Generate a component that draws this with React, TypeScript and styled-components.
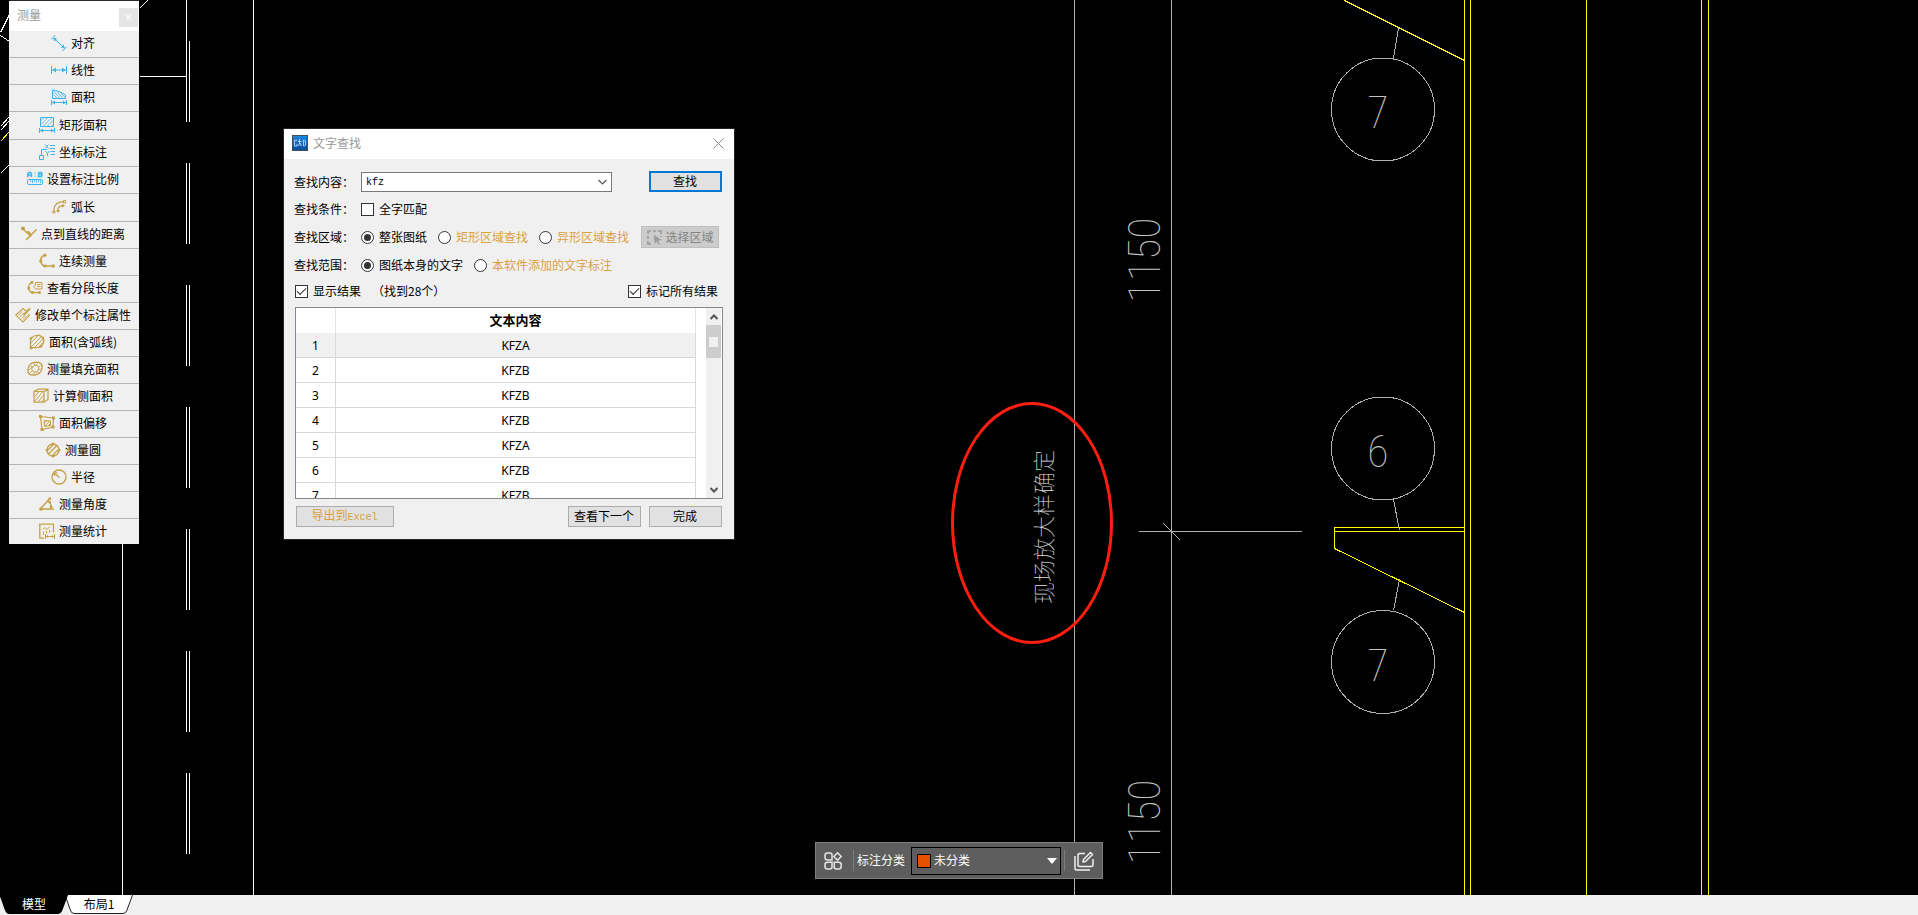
import React, { useState } from 'react';
import styled, { createGlobalStyle, css } from 'styled-components';

const GlobalStyle = createGlobalStyle`
  *, *::before, *::after { box-sizing: border-box; }
  html, body { margin: 0; height: 100%; background: #000; overflow: hidden; }
  body, button, input, select {
    font-family: "Noto Sans CJK SC", "Noto Sans", sans-serif;
    font-size: 12px;
    line-height: 16px;
    color: #000;
  }
`;

const BLUE = '#3cb4ee';
const GOLD = '#c5a148';
const CAD_GRAY = '#b0b0b0';
const CAD_YELLOW = '#ffff00';

/* ---------- page ---------- */

const Page = styled.div`
  display: flex;
  flex-direction: column;
  height: 100vh;
`;

const Canvas = styled.main`
  position: relative;
  flex: 1;
  min-height: 0;
  background: #000;
  overflow: hidden;
`;

const Drawing = styled.svg`
  position: absolute;
  inset: 0;
  width: 100%;
  height: 100%;
`;

const CadDigits = styled.text`
  font-family: "Roboto Condensed", Roboto, sans-serif;
  font-size: 44px;
  font-weight: 100;
  fill: #c4c4c4;
`;

const CadNote = styled.text`
  font-family: "Noto Sans CJK SC", sans-serif;
  font-size: 22px;
  font-weight: 100;
  fill: #e0e0e0;
`;

const DASH_STARTS = [41, 163, 285, 407, 529, 651, 773];

function CadDrawing() {
  return (
    <Drawing aria-label="CAD">
      <g transform="translate(0.5 0.5)" fill="none" strokeWidth="1" shapeRendering="crispEdges">
        <g stroke="#fff">
          <path d="M253 -1V2000M122 540V2000M186 -1V121M139 76H186" />
          {DASH_STARTS.map((y) => (
            <path key={y} d={`M186 ${y - 1}V${y + 80}M189 ${y - 1}V${y + 80}`} />
          ))}
          <path d="M9 14L0 32M0 35L9 41M0 126L9 116M0 130L9 120M0 173L9 164M139 8L147 0" />
          <path d="M15 -1V0M106 -1V1M110 -1V1M122 -1V1" />
        </g>
        <path d="M9 0H138" stroke="#2b2b2b" />
        <g stroke={CAD_YELLOW}>
          <path d="M0 141L9 131" />
          <path d="M1464 -1V2000M1470 -1V2000M1586 -1V2000M1701 -1V2000M1708 -1V2000" />
          <path d="M1344 0L1464 60M1464 527H1334V548L1464 612M1334 531H1464" />
        </g>
        <g stroke={CAD_GRAY}>
          <path d="M1074 -1V2000M1171 -1V2000M1138 531H1301M1163 523L1180 540" />
          <path d="M1398 28L1393 58M1393 499L1399 530M1399 579L1393 610" />
          <circle cx="1382.500" cy="109" r="51.500" />
          <circle cx="1382.500" cy="448" r="51.500" />
          <circle cx="1382.500" cy="661.500" r="51.500" />
        </g>
      </g>
      <CadDigits x="1378" y="128" textAnchor="middle">7</CadDigits>
      <CadDigits x="1378" y="467" textAnchor="middle">6</CadDigits>
      <CadDigits x="1378" y="681" textAnchor="middle">7</CadDigits>
      <CadDigits transform="translate(1160 260) rotate(-90)" textAnchor="middle">1150</CadDigits>
      <CadDigits transform="translate(1160 822) rotate(-90)" textAnchor="middle">1150</CadDigits>
      <CadNote transform="translate(1052 527) rotate(-90)" textAnchor="middle">现场放大样确定</CadNote>
      <ellipse cx="1032" cy="523" rx="79.500" ry="119.500" fill="none" stroke="#ff1e10" strokeWidth="3" />
    </Drawing>
  );
}

/* ---------- measure panel ---------- */

const Panel = styled.aside`
  position: absolute;
  left: 9px;
  top: 1px;
  width: 130px;
  background: #f0f0f0;
`;

const PanelTitle = styled.header`
  display: flex;
  align-items: center;
  justify-content: space-between;
  height: 30px;
  padding: 0 1px 2px 8px;
  background: #fff;
  color: #999;
`;

const PanelClose = styled.button`
  display: grid;
  place-items: center;
  width: 19px;
  height: 19px;
  margin-top: 4px;
  padding: 0;
  border: 0;
  background: #e5e5e5;
`;

const ToolGroup = styled.div`
  & + & { padding-top: 1px; }
`;

const ToolButton = styled.button`
  display: flex;
  align-items: center;
  justify-content: center;
  gap: 4px;
  width: 100%;
  height: 27px;
  padding: 0 2px 2px 0;
  border: 0;
  border-bottom: 1px solid #b4b4b4;
  background: #f0f0f0;
  white-space: nowrap;

  ${ToolGroup}:last-child &:last-child {
    height: 25px;
    border-bottom: 0;
  }
`;

const Glyph = styled.svg<{ $tone: string }>`
  flex: none;
  width: 16px;
  height: 16px;
  fill: none;
  stroke: ${(p) => p.$tone};
  color: ${(p) => p.$tone};
`;

const DimensionBar = () => (
  <>
    <path d="M0.5 11V16M15.5 11V16M1 13.5H15" />
    <path d="M1 13.5L4 11.5V15.5ZM15 13.5L12 11.5V15.5Z" fill="currentColor" stroke="none" />
  </>
);

type Tool = { label: string; icon: React.ReactNode };
type Group = { tone: string; tools: Tool[] };

const GROUPS: Group[] = [
  {
    tone: BLUE,
    tools: [
      {
        label: '对齐',
        icon: (
          <>
            <path d="M0 4.5L4.5 0M11.5 16L16 11.5M3 3.5L13 12.5" />
            <path d="M2 2.5L6 3.5L3.5 6.5ZM14 13.5L10 12.5L12.5 9.5Z" fill="currentColor" stroke="none" />
          </>
        ),
      },
      {
        label: '线性',
        icon: (
          <>
            <path d="M0.5 4V12M15.5 4V12M1 8H15" />
            <path d="M1.5 8L5 5.5V10.5ZM14.5 8L11 5.5V10.5Z" fill="currentColor" stroke="none" />
          </>
        ),
      },
      {
        label: '面积',
        icon: (
          <>
            <path d="M1.5 9.5V1C6 1.5 10 3 14.5 6V9.5Z" />
            <path d="M1.5 4L6 9.5M2 1L9 9.5M6 2.5L12 9.5M10 4L14.5 9" strokeWidth="0.8" />
            <DimensionBar />
          </>
        ),
      },
    ],
  },
  {
    tone: BLUE,
    tools: [
      {
        label: '矩形面积',
        icon: (
          <>
            <path d="M1.5 0.5H14.5V9.5H1.5Z" />
            <path d="M1.5 4L5 0.5M1.5 8L9 0.5M4 9.5L13 0.5M8 9.5L14.5 3M12 9.5L14.5 7" strokeWidth="0.8" />
            <DimensionBar />
          </>
        ),
      },
      {
        label: '坐标标注',
        icon: (
          <>
            <path d="M0.5 11.5H4.5V15.5H0.5ZM2.5 11.5V5.5H8" />
            <path d="M6 0.5L9.5 4.5M9.5 0.5L6 4.5M11 1.5H16M11 4.5H16M6.5 7L8.5 9.5L10.5 7M8.5 9.5V12M11.5 7.5H16M11.5 10.5H16" />
          </>
        ),
      },
      {
        label: '设置标注比例',
        icon: (
          <>
            <path d="M0.7 6V2.5L1.7 1.5H3.5L4.5 2.5V6M0.5 4H4.5" strokeWidth="1.4" />
            <path d="M11.5 1.5H14.5L15 2.5L14.5 3.5H11.5M11.5 1.5V5.5H14.5L15 4.5L14.5 3.5" strokeWidth="1.4" />
            <path d="M7.5 2.2H8.7M7.5 5H8.7" strokeWidth="1.2" />
            <rect x="0.5" y="8.5" width="15" height="5" rx="1" />
            <path d="M3.5 8.5V11M5.5 8.5V12M7.5 8.5V11M9.5 8.5V12M11.5 8.5V11M13.5 8.5V12" strokeWidth="0.8" />
          </>
        ),
      },
    ],
  },
  {
    tone: GOLD,
    tools: [
      {
        label: '弧长',
        icon: (
          <>
            <path d="M3 12V11C3 5.500 6.500 3 12.500 2.700M7 12V11C7 8.500 9 7 11.500 6.700" strokeWidth="1.3" />
            <path d="M1.800 12H4V14H1.800ZM12.500 1.500H14.500V4H12.500Z" />
            <path d="M5 11H9L7 14ZM11 4.800V8.800L14 6.700Z" fill="currentColor" stroke="none" />
          </>
        ),
      },
      {
        label: '点到直线的距离',
        icon: (
          <>
            <path d="M5 14L15.5 3.5M2 3L9 9.5M6 5.5C9 6 10 8 9.5 11" strokeWidth="1.5" />
            <circle cx="2" cy="2.5" r="2" fill="currentColor" stroke="none" />
          </>
        ),
      },
      {
        label: '连续测量',
        icon: (
          <>
            <path d="M6 2C3 3 1.5 5 1.5 8C2 10 3 12 5 13H14" strokeWidth="1.5" />
            <g fill="currentColor" stroke="none">
              <circle cx="6" cy="2.2" r="1.6" />
              <circle cx="1.8" cy="8" r="1.6" />
              <circle cx="6" cy="13" r="1.6" />
              <circle cx="14.2" cy="13" r="1.7" />
            </g>
          </>
        ),
      },
      {
        label: '查看分段长度',
        icon: (
          <>
            <path d="M5.5 2C3 3 1.5 5 1.5 8C2 10 3 12 5 12.5H13" strokeWidth="1.3" />
            <path d="M6.5 7L8.5 5V2.5H15V9H8.5L6.5 7ZM10 4.5H13.5M10 6.5H13.5" />
            <g fill="currentColor" stroke="none">
              <circle cx="5" cy="2.5" r="1.4" />
              <circle cx="1.7" cy="8" r="1.5" />
              <circle cx="5.5" cy="12.5" r="1.5" />
              <circle cx="12.5" cy="12.5" r="1.5" />
            </g>
          </>
        ),
      },
      {
        label: '修改单个标注属性',
        icon: (
          <>
            <path d="M11 4L8 1.500L0.800 8L8 15L14.500 8.500L13 7" strokeWidth="1.1" />
            <path d="M3.5 8L7.500 4.500M5 9.500L8.5 6.500M6.5 11L10 8.500M8 12.500L12 9" strokeWidth="0.9" />
            <path d="M8.5 8L15 1.500" strokeWidth="2" />
          </>
        ),
      },
      {
        label: '面积(含弧线)',
        icon: (
          <>
            <path d="M1.5 14V5C3 2.5 7 1 10.5 1.5C14 2.5 15.5 5.5 14.5 9C13 12.5 10 14 6 13.5Z" strokeWidth="1.3" />
            <path d="M2 9L8.5 2M2 13L12 3M6 13L14 5M10 12.5L14.5 8" />
            <g fill="currentColor" stroke="none">
              <circle cx="2" cy="4.5" r="1.4" />
              <circle cx="2" cy="14" r="1.4" />
              <circle cx="14" cy="4" r="1.3" />
              <circle cx="12" cy="12.5" r="1.3" />
            </g>
          </>
        ),
      },
      {
        label: '测量填充面积',
        icon: (
          <>
            <path d="M1 10.5C0.5 6 3 2 7 1.5C11 0.5 15 1.5 15.2 5C15.5 9 13 13 9.5 13.5C5.5 14.5 1.5 14.5 1 10.5Z" strokeWidth="1.3" />
            <path d="M7 4.5H10L12 7L10 11H6.5L4.5 8Z" />
            <path d="M1 10L5 6M2 13L5.5 9.5M6 14L8 11M3 5L6 6M7 1.5L8 4.5M11 1L9.5 4M15 4L11 6M15 8L11.5 8.5M12 12L10 10.5" strokeWidth="0.8" />
          </>
        ),
      },
      {
        label: '计算侧面积',
        icon: (
          <>
            <path d="M1 3.5L5 1.2H15V11.5L11 14.2H1ZM1 3.5H11V14M11 3.5L15 1.2" strokeWidth="1.2" />
            <path d="M1.5 9L6 3.5M2 13L9.5 4M5 14L11 7M8.5 14L11 11" />
          </>
        ),
      },
      {
        label: '面积偏移',
        icon: (
          <>
            <path d="M1.5 1.5L14.5 3L14 12L3 14.5Z" strokeWidth="1.2" />
            <path d="M5 5.5L11.5 6V10.5L5.5 11.5ZM5 9L8 6M6 11L11 6M9 11L11.5 8.5" />
            <path d="M0 0H3V3H0ZM13 1.5H16V4.5H13ZM12.5 10.5H15.5V13.5H12.5ZM1.5 13H4.5V16H1.5Z" fill="currentColor" stroke="none" />
          </>
        ),
      },
      {
        label: '测量圆',
        icon: (
          <>
            <circle cx="8" cy="8" r="6" strokeWidth="1.3" />
            <path d="M2 9L9 2M3.5 12L12 3.5M7 14L14 7" strokeWidth="1.3" />
            <path d="M8 0L10 2.5H6ZM8 16L10 13.5H6ZM0 8L2.5 6V10ZM16 8L13.5 6V10Z" fill="currentColor" stroke="none" />
          </>
        ),
      },
      {
        label: '半径',
        icon: (
          <>
            <circle cx="8" cy="8" r="7" strokeWidth="1.3" />
            <path d="M8.5 8.5L3.5 4.5M3.2 7V4.2H6.5" strokeWidth="1.3" />
          </>
        ),
      },
      {
        label: '测量角度',
        icon: (
          <>
            <path d="M11 2L1.5 13H15M9 5C11.5 6.5 12.5 9.5 12 13" strokeWidth="1.4" />
            <g fill="currentColor" stroke="none">
              <circle cx="11" cy="2.5" r="1.3" />
              <circle cx="2" cy="13" r="1.8" />
              <path d="M8.500 6L12 4.500L11.5 8ZM10 10H14L12.500 13Z" />
            </g>
          </>
        ),
      },
      {
        label: '测量统计',
        icon: (
          <>
            <path d="M5 15.200H0.8V1.2H14.5V9.5" strokeWidth="1.3" />
            <path d="M4 6.5L6 4.5L8 6.5L11 3.5M4.5 8.5V12M7.5 8V10.5M10.5 7V9.5M6.5 11V16M15.5 11V16M7 13.5H15" />
            <path d="M7 13.5L9 12V15ZM15 13.5L13 12V15Z" fill="currentColor" stroke="none" />
          </>
        ),
      },
    ],
  },
];

function MeasurePanel() {
  return (
    <Panel>
      <PanelTitle>
        测量
        <PanelClose aria-label="关闭">
          <svg width="7" height="7" viewBox="0 0 7 7" stroke="#fafafa" strokeWidth="1.4">
            <path d="M1 1L6 6M6 1L1 6" />
          </svg>
        </PanelClose>
      </PanelTitle>
      {GROUPS.map((group) => (
        <ToolGroup key={group.tools[0].label}>
          {group.tools.map((tool) => (
            <ToolButton key={tool.label}>
              <Glyph $tone={group.tone} viewBox="0 0 16 16" aria-hidden="true">
                {tool.icon}
              </Glyph>
              {tool.label}
            </ToolButton>
          ))}
        </ToolGroup>
      ))}
    </Panel>
  );
}

/* ---------- find dialog ---------- */

const Dialog = styled.section`
  position: absolute;
  left: 284px;
  top: 129px;
  width: 450px;
  background: #f0f0f0;
  box-shadow: 0 0 0 1px #242424;
`;

const DialogTitle = styled.header`
  display: flex;
  align-items: center;
  gap: 5px;
  height: 30px;
  padding: 0 10px 2px 8px;
  background: #fff;
  color: #999;
`;

const DialogName = styled.h1`
  flex: 1;
  margin: 0;
  font-size: 12px;
  font-weight: 400;
`;

const PlainButton = styled.button`
  display: grid;
  place-items: center;
  padding: 0;
  border: 0;
  background: none;
`;

const DialogBody = styled.form`
  display: flex;
  flex-direction: column;
  gap: 6px;
  padding: 12px 11px 12px 10px;
`;

const FieldRow = styled.div`
  display: flex;
  align-items: center;
  gap: 11px;
  height: 22px;
  white-space: nowrap;
`;

const SearchRow = styled(FieldRow)`
  height: 21px;
  padding-right: 1px;
`;

const ResultRow = styled(FieldRow)`
  height: 18px;
  padding: 0 5px 0 1px;
`;

const FieldName = styled.label`
  width: 56px;
`;

const Combo = styled.div`
  display: flex;
  align-items: center;
  width: 251px;
  height: 20px;
  padding: 0 4px;
  border: 1px solid #7a7a7a;
  background: #fff;
`;

const ComboInput = styled.input`
  flex: 1;
  min-width: 0;
  height: 18px;
  padding: 1px 0 0;
  border: 0;
  outline: 0;
  background: none;
  font-family: "Liberation Mono", monospace;
  font-size: 10px;
`;

const Option = styled.label<{ $accent?: boolean }>`
  display: flex;
  align-items: center;
  gap: 5px;
  color: ${(p) => (p.$accent ? '#dba040' : '#000')};
`;

const markBase = css`
  appearance: none;
  display: grid;
  place-items: center;
  flex: none;
  width: 13px;
  height: 13px;
  margin: 0;
  border: 1px solid #333;
  background: #fff;
`;

const Radio = styled.input.attrs({ type: 'radio' })`
  ${markBase}
  border-radius: 50%;

  &:checked::after {
    content: '';
    width: 7px;
    height: 7px;
    border-radius: 50%;
    background: #333;
  }
`;

const Checkbox = styled.input.attrs({ type: 'checkbox' })`
  ${markBase}

  &:checked::after {
    content: '';
    width: 9px;
    height: 5px;
    border: solid #333;
    border-width: 0 0 1px 1px;
    transform: rotate(-45deg) translate(1px, -1px);
  }
`;

const Push = styled.button<{ $primary?: boolean; $wide?: boolean }>`
  display: grid;
  place-items: center;
  width: ${(p) => (p.$wide ? 98 : 73)}px;
  height: 21px;
  padding: 0 1px 1px 0;
  border: ${(p) => (p.$primary ? '2px solid #0078d7' : '1px solid #adadad')};
  background: #e1e1e1;
  color: ${(p) => (p.$wide ? '#dba040' : '#000')};
  white-space: nowrap;
`;

const ExportText = styled.span`
  & > span {
    font-family: "Liberation Mono", monospace;
    font-size: 10px;
  }
`;

const RegionButton = styled.button`
  display: flex;
  align-items: center;
  justify-content: center;
  gap: 4px;
  width: 78px;
  height: 22px;
  margin-left: 1px;
  padding: 0;
  border: 1px solid #bfbfbf;
  background: #ccc;
  color: #838383;
`;

const Spacer = styled.div`
  flex: 1;
`;

const ListFrame = styled.div`
  display: flex;
  justify-content: space-between;
  height: 192px;
  margin: 1px 0 1px 1px;
  padding-right: 1px;
  border: 1px solid #828790;
  background: #fff;
  overflow: hidden;
`;

const ListViewport = styled.div`
  height: 190px;
  overflow: hidden;
`;

const ResultTable = styled.table`
  width: 400px;
  border-collapse: separate;
  border-spacing: 0;
  table-layout: fixed;
  font-family: "Noto Sans", sans-serif;
`;

const HeadCell = styled.th`
  height: 25px;
  padding: 0 0 2px;
  border-right: 1px solid #e4e4e4;
  font-family: "Noto Sans CJK SC", sans-serif;
  font-size: 13px;
  font-weight: 700;

  &:first-child { width: 40px; }
`;

const Cell = styled.td`
  height: 25px;
  padding: 2px 0 0;
  border-right: 1px solid #d8d8d8;
  border-bottom: 1px solid #d8d8d8;
  text-align: center;

  tr:first-child > & { background: #f0f0f0; }
`;

const Scrollbar = styled.div`
  display: flex;
  flex-direction: column;
  width: 15px;
  background: #f0f0f0;
`;

const ScrollArrow = styled(PlainButton)`
  height: 17px;
`;

const ScrollThumb = styled.div`
  display: grid;
  place-items: center;
  height: 33px;
  background: #cdcdcd;

  &::after {
    content: '';
    width: 9px;
    height: 10px;
    background: #f0f0f0;
  }
`;

const Actions = styled.footer`
  display: flex;
  gap: 8px;
  padding: 0 1px 0 2px;
`;

const RESULTS = ['KFZA', 'KFZB', 'KFZB', 'KFZB', 'KFZA', 'KFZB', 'KFZB'];

function FindDialog() {
  const [query, setQuery] = useState('kfz');
  return (
    <Dialog>
      <DialogTitle>
        <svg width="16" height="16" viewBox="0 0 16 16" aria-hidden="true">
          <defs>
            <linearGradient id="appBlue" x1="0" y1="0" x2="0" y2="1">
              <stop offset="0" stopColor="#1f86e0" />
              <stop offset="1" stopColor="#0a4c9c" />
            </linearGradient>
          </defs>
          <rect width="16" height="16" fill="#3f4c5c" />
          <rect x="1" y="1" width="14" height="14" fill="url(#appBlue)" />
          <path d="M5 5.5H2.5V11H5V9M7.5 4V9M6 6.5H9.5M6.5 11L8 8L9.5 11M11.5 5V11H12.5L13.5 10V6L12.5 5Z" fill="none" stroke="#b8d8fa" strokeWidth="0.9" />
        </svg>
        <DialogName>文字查找</DialogName>
        <PlainButton aria-label="关闭">
          <svg width="11" height="11" viewBox="0 0 11 11" stroke="#8c8c8c">
            <path d="M0.5 0.5L10.5 10.5M10.5 0.5L0.5 10.5" />
          </svg>
        </PlainButton>
      </DialogTitle>
      <DialogBody onSubmit={(e) => e.preventDefault()}>
        <SearchRow>
          <FieldName htmlFor="query">查找内容：</FieldName>
          <Combo>
            <ComboInput id="query" value={query} onChange={(e) => setQuery(e.target.value)} />
            <PlainButton type="button" aria-label="展开">
              <svg width="9" height="6" viewBox="0 0 9 6" fill="none" stroke="#555" strokeWidth="1.2">
                <path d="M0.5 1L4.5 5L8.5 1" />
              </svg>
            </PlainButton>
          </Combo>
          <Spacer />
          <Push $primary>查找</Push>
        </SearchRow>
        <FieldRow>
          <FieldName as="span">查找条件：</FieldName>
          <Option>
            <Checkbox />
            全字匹配
          </Option>
        </FieldRow>
        <FieldRow>
          <FieldName as="span">查找区域：</FieldName>
          <Option>
            <Radio name="area" defaultChecked />
            整张图纸
          </Option>
          <Option $accent>
            <Radio name="area" />
            矩形区域查找
          </Option>
          <Option $accent>
            <Radio name="area" />
            异形区域查找
          </Option>
          <RegionButton type="button" disabled>
            <svg width="15" height="15" viewBox="0 0 15 15" fill="none" stroke="#9a9a9a" aria-hidden="true">
              <path d="M1 4V1H4M6 1H9M11 1H14V4M1 6V9M1 11V14H4M14 6V7" strokeWidth="1.6" />
              <path d="M7 5L14.5 10L11 10.8L12.8 14L11.5 14.8L9.8 11.6L7.5 14Z" fill="#9a9a9a" stroke="none" />
            </svg>
            选择区域
          </RegionButton>
        </FieldRow>
        <FieldRow>
          <FieldName as="span">查找范围：</FieldName>
          <Option>
            <Radio name="scope" defaultChecked />
            图纸本身的文字
          </Option>
          <Option $accent>
            <Radio name="scope" />
            本软件添加的文字标注
          </Option>
        </FieldRow>
        <ResultRow>
          <Option>
            <Checkbox defaultChecked />
            显示结果
          </Option>
          <span>（找到28个）</span>
          <Spacer />
          <Option>
            <Checkbox defaultChecked />
            标记所有结果
          </Option>
        </ResultRow>
        <ListFrame>
          <ListViewport>
            <ResultTable>
              <thead>
                <tr>
                  <HeadCell aria-label="序号" />
                  <HeadCell>文本内容</HeadCell>
                </tr>
              </thead>
              <tbody>
                {RESULTS.map((text, i) => (
                  <tr key={i}>
                    <Cell>{i + 1}</Cell>
                    <Cell>{text}</Cell>
                  </tr>
                ))}
              </tbody>
            </ResultTable>
          </ListViewport>
          <Scrollbar>
            <ScrollArrow type="button" aria-label="向上">
              <svg width="8" height="6" viewBox="0 0 8 6" fill="none" stroke="#555" strokeWidth="2">
                <path d="M0.5 5L4 1.5L7.5 5" />
              </svg>
            </ScrollArrow>
            <ScrollThumb />
            <Spacer />
            <ScrollArrow type="button" aria-label="向下">
              <svg width="8" height="6" viewBox="0 0 8 6" fill="none" stroke="#555" strokeWidth="2">
                <path d="M0.5 1L4 4.5L7.5 1" />
              </svg>
            </ScrollArrow>
          </Scrollbar>
        </ListFrame>
        <Actions>
          <Push type="button" $wide>
            <ExportText>
              导出到<span>Excel</span>
            </ExportText>
          </Push>
          <Spacer />
          <Push type="button">查看下一个</Push>
          <Push type="button">完成</Push>
        </Actions>
      </DialogBody>
    </Dialog>
  );
}

/* ---------- category toolbar ---------- */

const CategoryBar = styled.div`
  position: absolute;
  left: 0;
  right: 0;
  bottom: 16px;
  display: flex;
  align-items: center;
  width: 288px;
  height: 37px;
  margin: 0 auto;
  padding: 0 8px;
  border: 1px solid #7f7f7f;
  background: #5e5e5e;
  color: #fff;
`;

const Divider = styled.span`
  width: 1px;
  height: 21px;
  background: #7c7c7c;
`;

const CategoryLabel = styled.label`
  padding: 0 6px 2px 3px;
`;

const CategoryField = styled.div`
  position: relative;
  width: 150px;
  height: 28px;
  margin-right: 3px;
`;

const CategorySelect = styled.select`
  appearance: none;
  width: 100%;
  height: 100%;
  padding: 0 24px 2px 22px;
  border: 1px solid #000;
  border-radius: 0;
  background: #5e5e5e;
  color: #fff;
`;

const Swatch = styled.span`
  position: absolute;
  left: 6px;
  top: 7px;
  width: 14px;
  height: 14px;
  border: 1px solid #000;
  background: #e65100;
`;

const Caret = styled.svg`
  position: absolute;
  right: 4px;
  top: 11px;
  pointer-events: none;
`;

const BarButton = styled(PlainButton)<{ $side: 'start' | 'end' }>`
  margin: ${(p) => (p.$side === 'start' ? '0 11px 0 0' : '0 0 0 9px')};
`;

function Category() {
  return (
    <CategoryBar>
      <BarButton $side="start" aria-label="全部分类">
        <svg width="18" height="18" viewBox="0 0 18 18" fill="none" stroke="#e6e6e6" strokeWidth="1.5">
          <path d="M3.500 1H6Q8 1 8 3V8H3.500Q1 8 1 5.500V3.500Q1 1 3.500 1Z" />
          <path d="M13.5 0.8L17.2 4.5L13.5 8.2L9.8 4.5Z" strokeLinejoin="round" />
          <path d="M3.500 10.200H8V15Q8 17 6 17H3.500Q1 17 1 14.500V12.700Q1 10.200 3.500 10.200Z" />
          <path d="M10.200 10.200H14.700Q17.200 10.200 17.200 12.700V14.500Q17.200 17 14.700 17H12.200Q10.200 17 10.200 15Z" />
        </svg>
      </BarButton>
      <Divider />
      <CategoryLabel htmlFor="category">标注分类</CategoryLabel>
      <CategoryField>
        <CategorySelect id="category">
          <option>未分类</option>
        </CategorySelect>
        <Swatch />
        <Caret width="10" height="6" viewBox="0 0 10 6" fill="#fff">
          <path d="M0 0H10L5 6Z" />
        </Caret>
      </CategoryField>
      <Divider />
      <BarButton $side="end" aria-label="编辑分类">
        <svg width="20" height="20" viewBox="0 0 20 20" fill="none" stroke="#f0f0f0" strokeWidth="1.5">
          <path d="M1 5V17.5C1 18.5 1.5 19 2.5 19H16" />
          <path d="M11 2.5H6C5 2.5 4 3 4 4V14C4 15 5 15.5 6 15.5H17C18.500 15.500 19 15 19 13.500V8" />
          <path d="M9 11L9.5 8.5L16.5 1.5L18.5 3.5L11.5 10.5Z" strokeLinejoin="round" />
        </svg>
      </BarButton>
    </CategoryBar>
  );
}

/* ---------- layout tabs ---------- */

const TabBar = styled.nav`
  display: flex;
  height: 20px;
  background: #f0f0f0;
`;

const Tab = styled.button<{ $active?: boolean }>`
  position: relative;
  display: grid;
  place-items: center;
  width: 68px;
  height: 20px;
  margin-right: -3px;
  padding: 0 0 2px;
  border: 0;
  background: none;
  color: ${(p) => (p.$active ? '#fff' : '#000')};
  z-index: ${(p) => (p.$active ? 1 : 0)};
`;

const TabShape = styled.svg`
  position: absolute;
  inset: 0;
`;

const TabName = styled.span`
  position: relative;
`;

function Tabs() {
  return (
    <TabBar>
      {['模型', '布局1'].map((name, i) => (
        <Tab key={name} $active={i === 0}>
          <TabShape width="68" height="20" viewBox="0 0 68 20" aria-hidden="true">
            <path
              d="M0 0L5 14Q6 18.500 9 18.500H58Q61 18.500 62 15L67.500 0"
              fill={i === 0 ? '#000' : '#fff'}
              stroke={i === 0 ? '#000' : '#222'}
            />
          </TabShape>
          <TabName>{name}</TabName>
        </Tab>
      ))}
    </TabBar>
  );
}

export default function App() {
  return (
    <Page>
      <GlobalStyle />
      <Canvas>
        <CadDrawing />
        <MeasurePanel />
        <FindDialog />
        <Category />
      </Canvas>
      <Tabs />
    </Page>
  );
}
